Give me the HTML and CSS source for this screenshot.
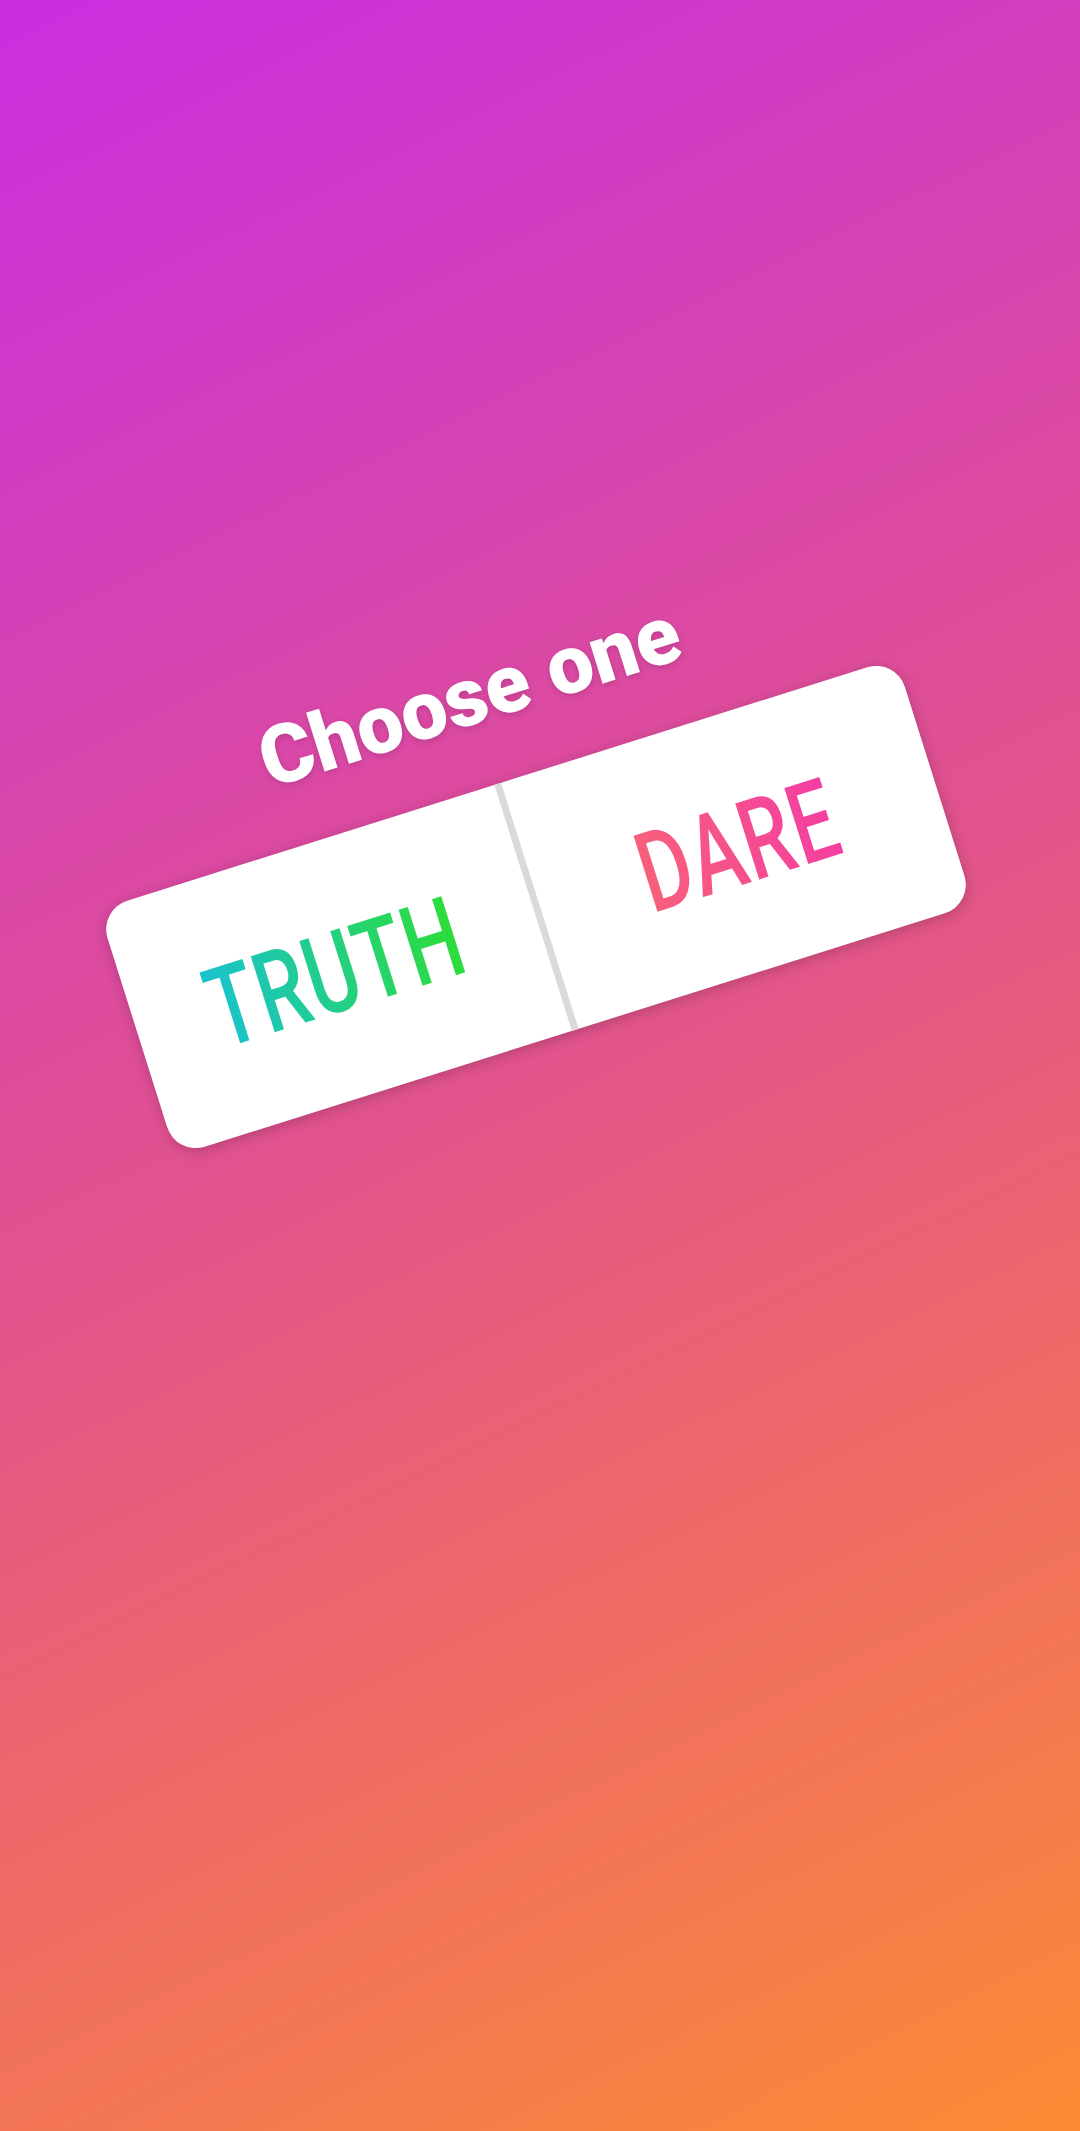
FILE: index.html
```html
<!DOCTYPE html>
<html lang="en">
<head>
<meta charset="utf-8">
<title>Choose one</title>
<link rel="stylesheet" href="styles.css">
</head>
<body>
<main class="stage">
  <section class="sticker">
    <h1 class="title">Choose one</h1>
    <div class="poll">
      <div class="option"><span class="label truth">TRUTH</span></div>
      <div class="divider"></div>
      <div class="option"><span class="label dare">DARE</span></div>
    </div>
  </section>
</main>
</body>
</html>
```
FILE: styles.css
```css
html, body {
  margin: 0;
  padding: 0;
}
body {
  width: 1080px;
  height: 2131px;
  overflow: hidden;
  font-family: Roboto, "Liberation Sans", sans-serif;
}
.stage {
  box-sizing: border-box;
  width: 1080px;
  height: 2131px;
  padding-top: 645px;
  padding-right: 8px;
  display: flex;
  justify-content: center;
  align-items: flex-start;
  background: linear-gradient(154deg, #c92ee0 0%, #e2548b 50%, #fd8a34 100%);
}
.sticker {
  display: flex;
  flex-direction: column;
  align-items: center;
  gap: 51px;
  transform-origin: 50% 262px;
  transform: rotate(-17.5deg);
}
.title {
  margin: 0;
  font-family: Roboto, "Liberation Sans", sans-serif;
  font-weight: 900;
  font-size: 82px;
  line-height: 1;
  color: #ffffff;
  text-shadow: 0 2px 6px rgba(0, 0, 0, 0.15);
  white-space: nowrap;
}
.poll {
  width: 836px;
  height: 258px;
  border-radius: 30px;
  background: #ffffff;
  box-shadow: 0 3px 14px rgba(0, 0, 0, 0.2);
  display: flex;
  align-items: stretch;
}
.option {
  flex: 1;
  display: flex;
  align-items: center;
  justify-content: center;
  padding-top: 6px;
}
.divider {
  width: 7px;
  background: #dadada;
}
.label {
  display: inline-block;
  font-family: Roboto, "Liberation Sans", sans-serif;
  font-weight: 500;
  font-size: 112px;
  line-height: 1;
  letter-spacing: 2px;
  transform: scaleX(0.71);
  -webkit-background-clip: text;
  background-clip: text;
  color: transparent;
}
.truth {
  background-image: linear-gradient(to right, #19c2d0, #2ddd36);
}
.dare {
  background-image: linear-gradient(to right, #f8607a, #f43ea3);
}
```
